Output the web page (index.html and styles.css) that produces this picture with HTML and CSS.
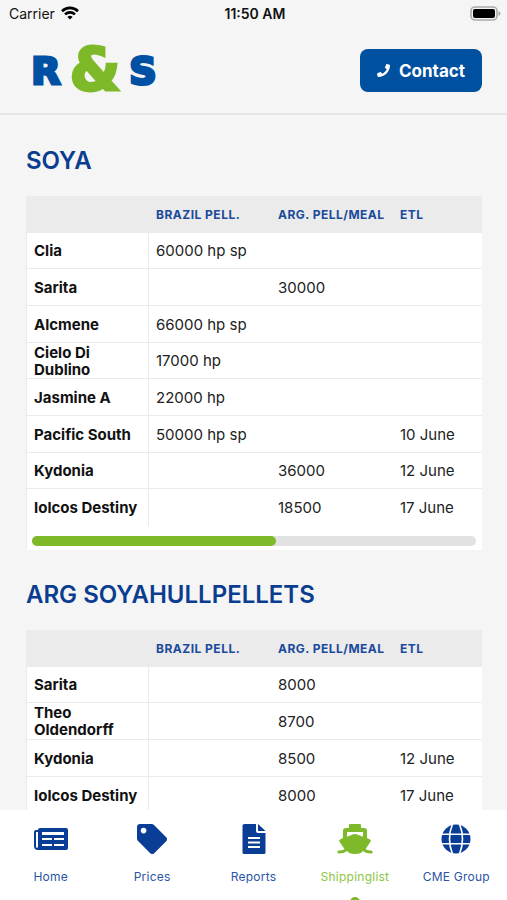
FILE: index.html
```html
<!DOCTYPE html>
<html lang="en">
<head>
    <meta charset="UTF-8">
    <meta name="viewport" content="width=device-width, initial-scale=1.0">
    <title>Shippinglist</title>
    <link rel="stylesheet" href="styles.css">
</head>
<body>
    <div class="status-bar">
        <div class="carrier">
            <span>Carrier</span>
            <svg width="18" height="14" viewBox="0 0 18 14" fill="none" stroke="#000" stroke-width="2.6">
                <path d="M1 5.2a11.4 11.4 0 0 1 16 0"/>
                <path d="M4 8.4a7.2 7.2 0 0 1 10 0"/>
                <path d="M9 13.6L6.4 11a3.8 3.8 0 0 1 5.2 0z" fill="#000" stroke="none"/>
            </svg>
        </div>
        <div class="time">11:50 AM</div>
        <svg class="battery" width="31" height="15" viewBox="0 0 31 15">
            <rect x="1" y="1" width="26" height="13" rx="4" fill="#f5f5f5" stroke="#aaa" stroke-width="1.6"/>
            <rect x="3" y="3" width="22" height="9" rx="2" fill="#000"/>
            <path d="M28.5 5v5q2-.7 2-2.500t-2-2.500z" fill="#aaa"/>
        </svg>
    </div>

    <header class="header">
        <svg class="logo" width="136" height="42" viewBox="0 0 136 42" role="img" aria-label="R&amp;S">
            <text class="logo-letter" x="20" y="34">R</text>
            <text class="logo-letter" x="117" y="34">S</text>
            <text class="logo-and" x="69" y="40">&amp;</text>
        </svg>
        <button class="contact-btn" type="button">
            <svg width="13" height="13" viewBox="0 0 512 512" fill="#fff">
                <path d="M493 25L389 1c-11-3-23 3-27 14l-48 112c-4 10-1 21 7 28l61 50c-36 76-99 140-177 177l-50-61c-7-8-18-11-28-7L15 362c-11 4-17 16-14 27l24 104c3 11 12 19 24 19 256 0 463-207 463-464 0-11-8-21-19-23z"/>
            </svg>
            Contact
        </button>
    </header>

    <main class="content">
        <h2>SOYA</h2>
        <div class="card">
            <div class="table-scroll">
                <table>
                    <thead>
                        <tr><th class="name-col"></th><th scope="col">BRAZIL PELL.</th><th scope="col">ARG. PELL/MEAL</th><th scope="col">ETL</th></tr>
                    </thead>
                    <tbody>
                        <tr><th scope="row">Clia</th><td>60000 hp sp</td><td></td><td></td></tr>
                        <tr><th scope="row">Sarita</th><td></td><td>30000</td><td></td></tr>
                        <tr><th scope="row">Alcmene</th><td>66000 hp sp</td><td></td><td></td></tr>
                        <tr><th scope="row">Cielo Di Dublino</th><td>17000 hp</td><td></td><td></td></tr>
                        <tr><th scope="row">Jasmine A</th><td>22000 hp</td><td></td><td></td></tr>
                        <tr><th scope="row">Pacific South</th><td>50000 hp sp</td><td></td><td>10 June</td></tr>
                        <tr><th scope="row">Kydonia</th><td></td><td>36000</td><td>12 June</td></tr>
                        <tr><th scope="row">Iolcos Destiny</th><td></td><td>18500</td><td>17 June</td></tr>
                    </tbody>
                </table>
            </div>
            <div class="scroll-track"><div class="scroll-thumb" style="width: 55%"></div></div>
        </div>

        <h2>ARG SOYAHULLPELLETS</h2>
        <div class="card">
            <div class="table-scroll">
                <table>
                    <thead>
                        <tr><th class="name-col"></th><th scope="col">BRAZIL PELL.</th><th scope="col">ARG. PELL/MEAL</th><th scope="col">ETL</th></tr>
                    </thead>
                    <tbody>
                        <tr><th scope="row">Sarita</th><td></td><td>8000</td><td></td></tr>
                        <tr><th scope="row">Theo Oldendorff</th><td></td><td>8700</td><td></td></tr>
                        <tr><th scope="row">Kydonia</th><td></td><td>8500</td><td>12 June</td></tr>
                        <tr><th scope="row">Iolcos Destiny</th><td></td><td>8000</td><td>17 June</td></tr>
                    </tbody>
                </table>
            </div>
            <div class="scroll-track"><div class="scroll-thumb" style="width: 55%"></div></div>
        </div>
    </main>

    <nav class="tab-bar">
        <a href="#home">
            <svg width="34" height="30" viewBox="0 0 34 30">
                <path d="M6 4h26q2 0 2 2v18q0 2-2 2H4q-4 0-4-4V8q0-2 2-2h2q0-2 2-2zM2 8v14q0 2 1 2t1-2V8zM8 8v3h22V8zM8 14v2h10v-2zM20 14v2h10v-2zM8 20v2h10v-2zM20 20v2h10v-2z" fill="#0a3d96" fill-rule="evenodd"/>
            </svg>
            <span>Home</span>
        </a>
        <a href="#prices">
            <svg width="30" height="30" viewBox="0 0 512 512">
                <path d="M0 252V48C0 22 22 0 48 0h204c13 0 25 5 34 14l212 212c19 19 19 49 0 68L294 498c-19 19-49 19-68 0L14 286c-9-9-14-21-14-34zM112 64a48 48 0 1 0 0 96 48 48 0 0 0 0-96z" fill="#0a3d96" fill-rule="evenodd"/>
            </svg>
            <span>Prices</span>
        </a>
        <a href="#reports">
            <svg width="30" height="30" viewBox="0 0 30 30">
                <path d="M5.500 0H17v7q0 2 2 2h7.500v19.500q0 1.500-1.500 1.500H5q-1.500 0-1.500-1.500V1.500Q3.500 0 5.500 0zM9 13v2h12v-2zM9 17.500v2h12v-2zM9 22v2h12v-2z" fill="#0a3d96" fill-rule="evenodd"/>
                <path d="M19 0l7.500 7H19z" fill="#0a3d96"/>
            </svg>
            <span>Reports</span>
        </a>
        <a class="active" href="#shippinglist" aria-current="page">
            <svg width="38" height="30" viewBox="0 0 38 30" fill="#7db928">
                <path d="M14 0h10q1 0 1 1v3h3q3 0 3 3v7l3 1.500q1.500.8.500 2.300l-5 7.200q1.700 1.500 5.500 1.600 1.600 0 1.600 1.700T35 29.500q-5 0-8-2.500-2 3-8 3t-8-3q-3 2.500-8 2.500-1.600 0-1.600-1.500T3 26.600q3.800-.1 5.500-1.600l-5-7.200q-1-1.500.5-2.300L7 14V7q0-3 3-3h3V1q0-1 1-1zM11 8v4.800l6.500-2.500q1.500-.5 3 0l6.500 2.500V8z" fill-rule="evenodd"/>
            </svg>
            <span>Shippinglist</span>
        </a>
        <a href="#cme">
            <svg width="30" height="30" viewBox="0 0 30 30">
                <circle cx="15" cy="15" r="14.500" fill="#0a3d96"/>
                <g fill="none" stroke="#fff" stroke-width="1.600">
                    <path d="M0 10.200h30M0 19.800h30"/>
                    <path d="M11.500 0Q5.500 15 11.500 30M18.500 0Q24.500 15 18.500 30"/>
                </g>
            </svg>
            <span>CME Group</span>
        </a>
    </nav>
</body>
</html>
```

FILE: styles.css
```css
* {
    box-sizing: border-box;
}
body {
    margin: 0;
    height: 100vh;
    display: flex;
    flex-direction: column;
    overflow: hidden;
    background-color: #f5f5f5;
    font-family: Inter, "Liberation Sans", sans-serif;
    font-size: 15px;
    color: #222;
}
svg {
    display: block;
    flex: none;
}
.status-bar {
    display: grid;
    grid-template-columns: 1fr auto 1fr;
    align-items: center;
    height: 28px;
    padding: 0 6px 2px 9px;
    font-size: 14px;
    color: #111;
}
.carrier {
    display: flex;
    align-items: center;
    gap: 6px;
}
.time {
    font-weight: 600;
}
.battery {
    justify-self: end;
}
.header {
    display: flex;
    justify-content: space-between;
    align-items: center;
    height: 87px;
    padding: 0 25px 0 26px;
    border-bottom: 2px solid #e6e6e6;
}
.logo {
    font-family: "DejaVu Sans", sans-serif;
    font-weight: bold;
    text-anchor: middle;
    overflow: visible;
}
.logo-letter {
    font-size: 38px;
    fill: #0050a4;
    stroke: #0050a4;
    stroke-width: 3px;
}
.logo-and {
    font-size: 58px;
    fill: #7db928;
    stroke: #7db928;
    stroke-width: 3px;
}
.contact-btn {
    display: flex;
    align-items: center;
    justify-content: center;
    gap: 9px;
    height: 43px;
    padding: 0 17px;
    border: none;
    border-radius: 8px;
    background-color: #0050a0;
    color: #fff;
    font-family: inherit;
    font-size: 17px;
    font-weight: 700;
    cursor: pointer;
}
.content {
    flex: 1;
    min-height: 0;
    padding: 32px 25px 0 26px;
    overflow-y: auto;
    scrollbar-width: none;
}
h2 {
    margin: 0 0 21px;
    font-size: 24px;
    line-height: 28px;
    font-weight: 600;
    color: #0a3d8f;
}
.card {
    margin-bottom: 31px;
    padding-bottom: 4px;
    border-left: 1px solid #ebebeb;
    background-color: #fff;
}
.table-scroll {
    padding-bottom: 10px;
    overflow-x: auto;
    scrollbar-width: none;
}
table {
    width: 488px;
    table-layout: fixed;
    border-collapse: separate;
    border-spacing: 0;
}
th, td {
    height: 37px;
    padding: 0 7px;
    line-height: 17px;
    text-align: left;
    border-bottom: 1px solid #ebebeb;
}
tbody tr:nth-child(3n+1) > * {
    height: 36px;
}
thead th {
    background-color: #ebebeb;
    font-size: 12px;
    font-weight: 700;
    letter-spacing: 0.04em;
    white-space: nowrap;
    color: #1a4a9c;
}
.name-col {
    width: 122px;
}
tbody th {
    border-right: 1px solid #ebebeb;
    font-weight: 700;
    color: #111;
}
tbody tr:last-child > * {
    border-bottom: none;
}
.scroll-track {
    height: 10px;
    margin: 0 6px 0 5px;
    border-radius: 5px;
    background-color: #e2e2e2;
}
.scroll-thumb {
    height: 100%;
    border-radius: 5px;
    background-color: #7db928;
}
.tab-bar {
    display: flex;
    height: 90px;
    overflow: hidden;
    background-color: #fff;
}
.tab-bar a {
    flex: 1;
    display: flex;
    flex-direction: column;
    align-items: center;
    padding-top: 14px;
    font-size: 12px;
    line-height: 16px;
    letter-spacing: 0.02em;
    text-decoration: none;
    color: #2a55a5;
}
.tab-bar span {
    margin-top: 15px;
}
.tab-bar .active {
    color: #8cc63f;
}
.tab-bar .active::after {
    content: "";
    flex: none;
    width: 10px;
    height: 10px;
    margin-top: 12px;
    border-radius: 50%;
    background-color: #7db928;
}
```
